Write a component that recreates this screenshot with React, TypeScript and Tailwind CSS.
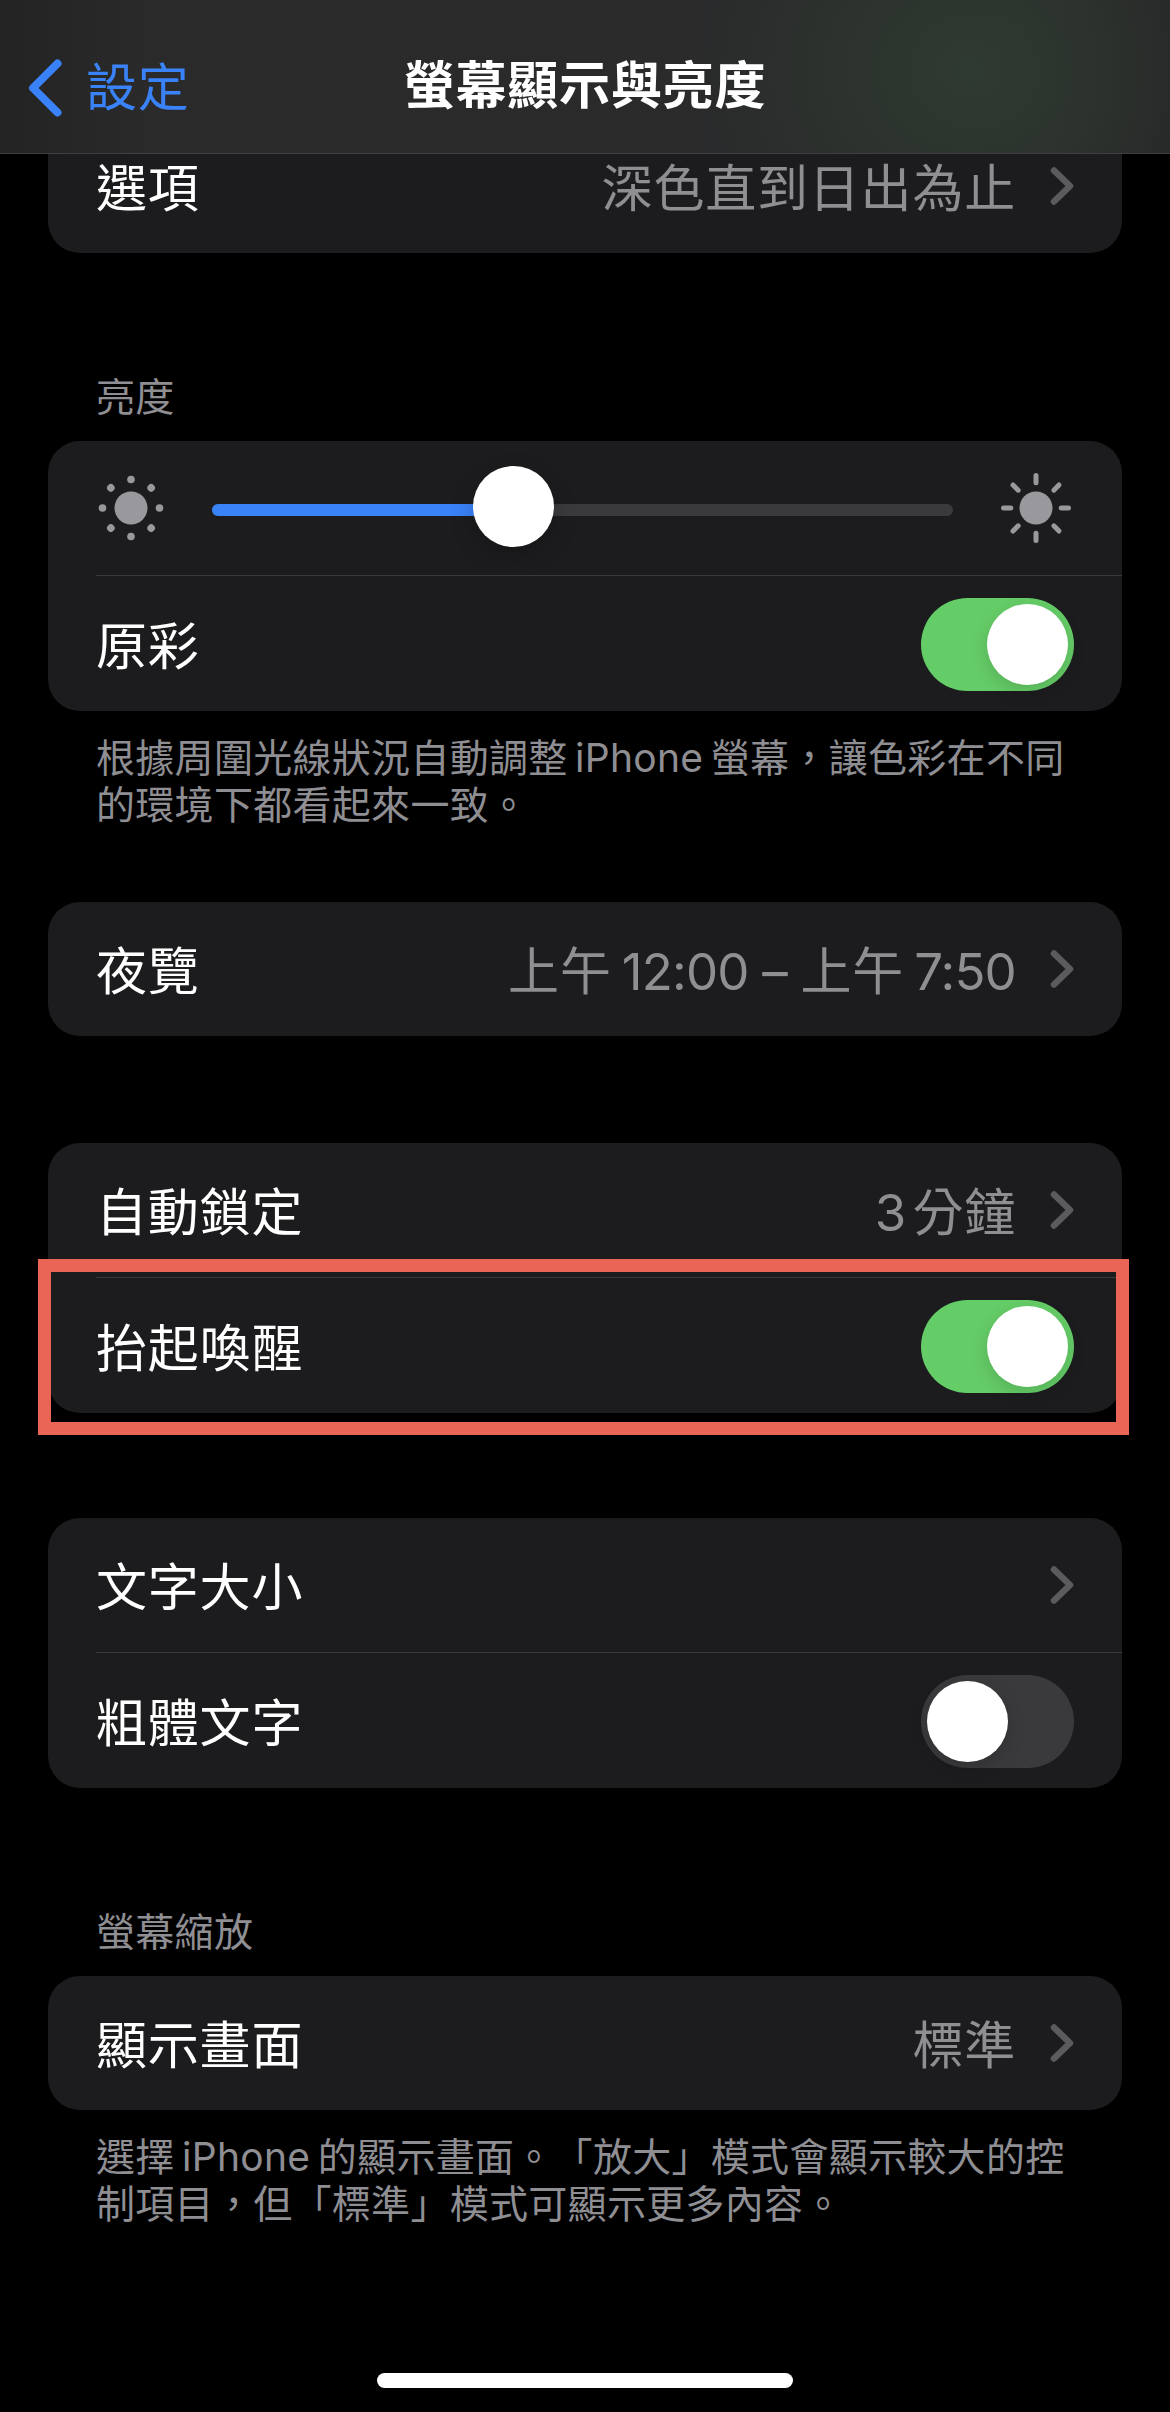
import React from 'react';

const Chevron = () => (
  <svg width="24" height="38" viewBox="0 0 24 38" fill="none" className="shrink-0">
    <path d="M4 3.5 L20 19 L4 34.5" stroke="#5b5b5f" strokeWidth="6.5" strokeLinecap="round" strokeLinejoin="round" />
  </svg>
);

const Toggle = ({ on }: { on: boolean }) => (
  <div className={`w-[153px] h-[93px] rounded-full p-[6px] flex ${on ? 'bg-[#65cd67] justify-end' : 'bg-[#3a3a3c] justify-start'}`}>
    <div className="w-[81px] h-[81px] rounded-full bg-white shadow-[0_6px_18px_rgba(0,0,0,0.15)]" />
  </div>
);

const SmallSun = () => (
  <svg width="66" height="66" viewBox="-33 -33 66 66" className="shrink-0">
    <circle r="16.5" fill="#98989d" />
    {[0, 45, 90, 135, 180, 225, 270, 315].map((a) => (
      <circle key={a} cx="28.5" cy="0" r="3.8" fill="#98989d" transform={`rotate(${a})`} />
    ))}
  </svg>
);

const BigSun = () => (
  <svg width="74" height="74" viewBox="-37 -37 74 74" className="shrink-0">
    <circle r="16.5" fill="#98989d" />
    {[0, 45, 90, 135, 180, 225, 270, 315].map((a) => (
      <line key={a} x1="25.2" y1="0" x2="32.5" y2="0" stroke="#98989d" strokeWidth="5" strokeLinecap="round" transform={`rotate(${a})`} />
    ))}
  </svg>
);

const Row = ({ label, value, chevron, toggle }: { label: string; value?: React.ReactNode; chevron?: boolean; toggle?: boolean }) => (
  <div className="h-[134px] px-[48px] flex items-center justify-between">
    <span className="pt-[6px] text-white">{label}</span>
    <div className="flex items-center gap-[34px]">
      {value && <span className="pt-[6px] text-[#8e8e93]">{value}</span>}
      {chevron && <Chevron />}
      {toggle !== undefined && <Toggle on={toggle} />}
    </div>
  </div>
);

const Divider = () => <div className="ml-[48px] mb-px h-px bg-[#3a3a3c]" />;

const Card = ({ children, className = '' }: { children: React.ReactNode; className?: string }) => (
  <div className={`mx-[48px] rounded-[32px] bg-[#1c1c1e] ${className}`}>{children}</div>
);

export default function App() {
  return (
    <div className="relative w-[1170px] h-[2412px] overflow-hidden bg-black text-[51px] leading-[60px] tracking-[0.8px] [text-spacing-trim:space-all] font-['Inter','Noto_Sans_CJK_TC',sans-serif]">
      {/* Nav */}
      <div className="relative z-10 h-[154px] pt-[18px] flex items-center justify-center border-b border-[#3f3f41] bg-[radial-gradient(ellipse_260px_230px_at_970px_70px,#2f3a30,transparent_100%),linear-gradient(90deg,#232324,#2a2a2b_12%,#2a2b2c_90%,#262627)]">
        <div className="absolute left-[28px] top-[58px] flex items-center gap-[24px]">
          <svg width="34" height="58" viewBox="0 0 34 58" fill="none">
            <path d="M29.5 4.5 L5 29 L29.5 53.5" stroke="#3a82f7" strokeWidth="8" strokeLinecap="round" strokeLinejoin="round" />
          </svg>
          <span className="text-[#3a82f7]">設定</span>
        </div>
        <span className="text-white font-semibold">螢幕顯示與亮度</span>
      </div>

      <Card className="-mt-[35px]">
        <Row label="選項" value="深色直到日出為止" chevron />
      </Card>

      <div className="mt-[120px] px-[96px] text-[39px] leading-[47px] tracking-[0.3px] text-[#8e8e93]">亮度</div>
      <Card className="mt-[21px]">
        <div className="h-[134px] pl-[50px] pr-[49px] flex items-center">
          <SmallSun />
          <div className="relative ml-[48px] mr-[46px] mt-[4px] flex-1 h-[12px] rounded-full bg-[#3a3a3c]">
            <div className="h-full w-[300px] rounded-full bg-[#3a82f7]" />
            <div className="absolute left-[261px] top-[-38px] w-[81px] h-[81px] rounded-full bg-white shadow-[0_8px_24px_rgba(0,0,0,0.2)]" />
          </div>
          <BigSun />
        </div>
        <Divider />
        <Row label="原彩" toggle />
      </Card>
      <div className="mt-[23px] px-[96px] text-[39px] leading-[47px] tracking-[0.3px] text-[#8e8e93]">
        根據周圍光線狀況自動調整{'\u2009'}iPhone{'\u2009'}螢幕，讓色彩在不同
        <br />
        的環境下都看起來一致。
      </div>

      <Card className="mt-[74px]">
        <Row
          label="夜覽"
          value={
            <>
              上午{'\u2009'}
              <span className="tracking-[-0.8px]">12:00 – </span>
              上午{'\u2009'}
              <span className="tracking-[-0.8px]">7:50</span>
            </>
          }
          chevron
        />
      </Card>

      <Card className="mt-[107px]">
        <Row label="自動鎖定" value={'3\u200a分鐘'} chevron />
        <Divider />
        <Row label="抬起喚醒" toggle />
      </Card>

      <Card className="mt-[105px]">
        <Row label="文字大小" chevron />
        <Divider />
        <Row label="粗體文字" toggle={false} />
      </Card>

      <div className="mt-[120px] px-[96px] text-[39px] leading-[47px] tracking-[0.3px] text-[#8e8e93]">螢幕縮放</div>
      <Card className="mt-[21px]">
        <Row label="顯示畫面" value="標準" chevron />
      </Card>
      <div className="mt-[23px] px-[96px] text-[39px] leading-[47px] tracking-[0.3px] text-[#8e8e93]">
        選擇{'\u2009'}iPhone{'\u2009'}的顯示畫面。「放大」模式會顯示較大的控
        <br />
        制項目，但「標準」模式可顯示更多內容。
      </div>

      {/* Highlight box */}
      <div className="absolute left-[38px] top-[1259px] w-[1091px] h-[176px] border-[13px] border-[#eb6556]" />

      {/* Home indicator */}
      <div className="absolute left-[377px] top-[2373px] w-[416px] h-[15px] rounded-full bg-white" />
    </div>
  );
}
